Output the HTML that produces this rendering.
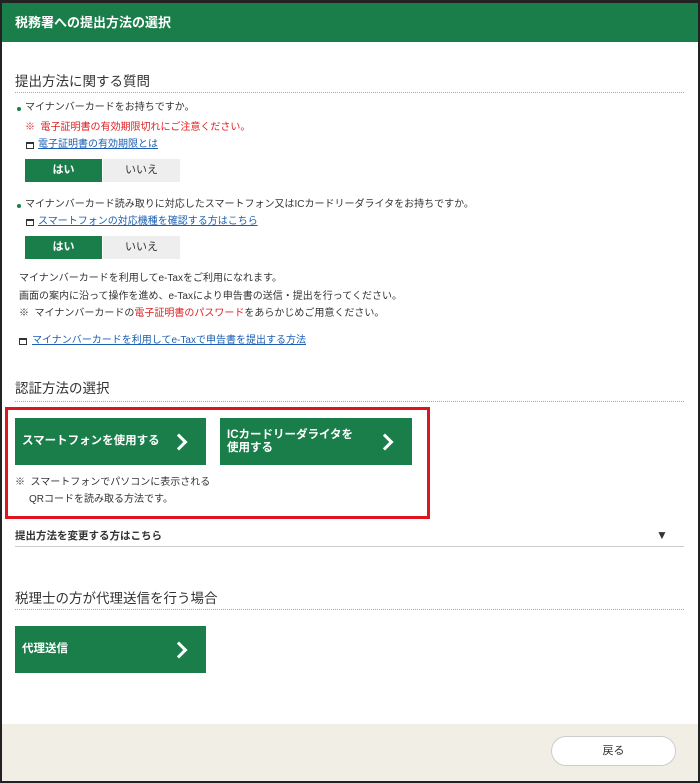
<!DOCTYPE html>
<html><head><meta charset="utf-8"><style>
*{margin:0;padding:0;box-sizing:border-box}
body{width:700px;height:783px;background:#fff;font-family:"Liberation Sans","Noto Sans CJK JP",sans-serif;color:#333;position:relative;overflow:hidden}
.frame{position:absolute;left:0;top:0;width:700px;height:783px;border:2px solid #222;border-top:3px solid #222}
.a{position:absolute;white-space:nowrap}
.hdr{position:absolute;left:2px;top:3px;width:696px;height:39px;background:#1a7e4a;color:#fff;font-weight:bold;font-size:13px;line-height:39px;padding-left:13px}
.h2{font-size:13.5px;color:#333}
.dot{position:absolute;left:15px;width:669px;height:1px;background:repeating-linear-gradient(90deg,#e8a030 0 1px,transparent 1px 2px)}
.s{font-size:10px;line-height:14px}
.red{color:#e02020}
.lnk{color:#1a5fb4;text-decoration:underline}
.ic{position:absolute;width:8px;height:7px;border:1.5px solid #333;border-top-width:2.5px}
.yes{position:absolute;width:77px;height:23px;background:#1a7e4a;color:#fff;font-size:11px;text-align:center;line-height:23px;font-weight:bold}
.no{position:absolute;width:77px;height:23px;background:#eee;color:#333;font-size:11px;text-align:center;line-height:23px}
.bul{position:absolute;width:4px;height:4px;border-radius:50%;background:#1a7e4a}
.gb{position:absolute;background:#1a7e4a;color:#fff;font-weight:bold;font-size:11.5px;line-height:13px;padding-left:7px;display:flex;align-items:center}
.chev{position:absolute;right:21px;top:50%;width:12px;height:12px;border-right:3px solid #fff;border-top:3px solid #fff;transform:translateY(-50%) rotate(45deg)}
</style></head><body>
<div class="hdr">税務署への提出方法の選択</div>
<div class="a h2" style="left:15px;top:70px">提出方法に関する質問</div>
<div class="dot" style="top:92px"></div>
<div class="bul" style="left:17px;top:107px"></div>
<div class="a s" style="left:25px;top:101px">マイナンバーカードをお持ちですか。</div>
<div class="a s red" style="left:25px;top:121px">※ &nbsp;電子証明書の有効期限切れにご注意ください。</div>
<div class="ic" style="left:26px;top:142px"></div>
<div class="a s lnk" style="left:38px;top:138px">電子証明書の有効期限とは</div>
<div class="yes" style="left:25px;top:159px">はい</div><div class="no" style="left:103px;top:159px">いいえ</div>
<div class="bul" style="left:17px;top:204px"></div>
<div class="a s" style="left:25px;top:198px">マイナンバーカード読み取りに対応したスマートフォン又はICカードリーダライタをお持ちですか。</div>
<div class="ic" style="left:26px;top:219px"></div>
<div class="a s lnk" style="left:38px;top:215px">スマートフォンの対応機種を確認する方はこちら</div>
<div class="yes" style="left:25px;top:236px">はい</div><div class="no" style="left:103px;top:236px">いいえ</div>
<div class="a s" style="left:19px;top:272px">マイナンバーカードを利用してe-Taxをご利用になれます。</div>
<div class="a s" style="left:19px;top:290px">画面の案内に沿って操作を進め、e-Taxにより申告書の送信・提出を行ってください。</div>
<div class="a s" style="left:19px;top:307px">※ &nbsp;マイナンバーカードの<span class="red">電子証明書のパスワード</span>をあらかじめご用意ください。</div>
<div class="ic" style="left:19px;top:338px"></div>
<div class="a s lnk" style="left:32px;top:334px">マイナンバーカードを利用してe-Taxで申告書を提出する方法</div>
<div class="a h2" style="left:15px;top:377px">認証方法の選択</div>
<div class="dot" style="top:401px"></div>
<div style="position:absolute;left:5px;top:407px;width:425px;height:112px;border:3px solid #e0141e"></div>
<div class="gb" style="left:15px;top:418px;width:191px;height:47px">スマートフォンを使用する<span class="chev"></span></div>
<div class="gb" style="left:220px;top:418px;width:192px;height:47px">ICカードリーダライタを<br>使用する<span class="chev"></span></div>
<div class="a s" style="left:15px;top:476px">※ &nbsp;スマートフォンでパソコンに表示される</div>
<div class="a s" style="left:29px;top:493px">QRコードを読み取る方法です。</div>
<div class="a" style="left:15px;top:528px;font-size:10.5px;font-weight:bold">提出方法を変更する方はこちら</div>
<div class="a" style="left:656px;top:528px;font-size:12px">▼</div>
<div style="position:absolute;left:15px;top:546px;width:669px;border-top:1px solid #ccc"></div>
<div class="a h2" style="left:15px;top:587px">税理士の方が代理送信を行う場合</div>
<div class="dot" style="top:609px"></div>
<div class="gb" style="left:15px;top:626px;width:191px;height:47px">代理送信<span class="chev"></span></div>
<div style="position:absolute;left:2px;top:724px;width:696px;height:57px;background:#f1efe5"></div>
<div style="position:absolute;left:551px;top:736px;width:125px;height:30px;background:#fff;border:1px solid #ccc;border-radius:15px;font-size:11px;text-align:center;line-height:28px;color:#333">戻る</div>
<div class="frame"></div>
</body></html>
